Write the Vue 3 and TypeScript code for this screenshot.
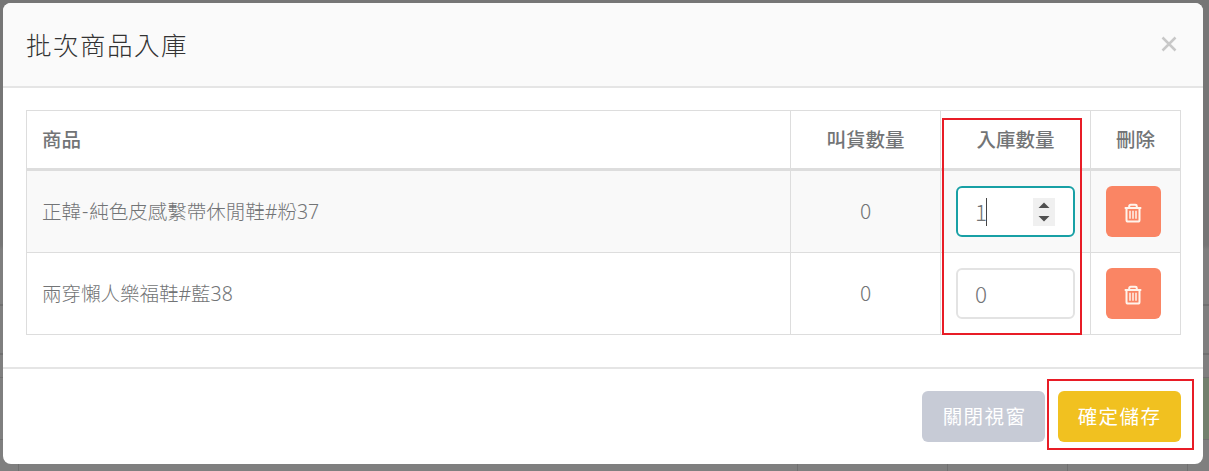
<script setup lang="ts">
interface StockRow {
  name: string[]
  ordered: number
  incoming: number
  active: boolean
}

const headings: string[] = ['商品', '叫貨數量', '入庫數量', '刪除']
const rows: StockRow[] = [
  { name: ['正韓', '-', '純色皮感繫帶休閒鞋#粉37'], ordered: 0, incoming: 1, active: true },
  { name: ['兩穿懶人樂福鞋#藍38'], ordered: 0, incoming: 0, active: false },
]
</script>

<template>
  <div class="backdrop">
    <i class="line edge e1"></i><i class="line edge e2"></i><i class="line edge e3"></i><i class="line edge e4"></i>
    <i class="green"></i>
    <i class="line col c1"></i><i class="line col c2"></i><i class="line col c3"></i><i class="line col c4"></i><i class="line col c5"></i>
    <section class="modal">
      <header class="head">
        <h1>批次商品入庫</h1>
        <button class="close" aria-label="關閉">
          <svg width="16" height="16" viewBox="0 0 16 16"><path d="M1.5 1.5 14.5 14.5M14.5 1.5 1.5 14.5" /></svg>
        </button>
      </header>
      <div class="body">
        <div class="table">
          <div class="row header">
            <div v-for="(h, i) in headings" :key="h" class="cell" :class="{ first: i === 0 }"><span>{{ h }}</span></div>
          </div>
          <div v-for="row in rows" :key="row.name[0]" class="row item" :class="{ striped: row.active }">
            <div class="cell first name"><span v-for="part in row.name" :key="part">{{ part }}</span></div>
            <div class="cell ordered"><span>{{ row.ordered }}</span></div>
            <div class="cell entry">
              <div class="field" :class="{ active: row.active }">
                <span class="value">{{ row.incoming }}</span>
                <i v-if="row.active" class="caret"></i>
                <svg v-if="row.active" class="spinner" width="22" height="28" viewBox="0 0 22 28">
                  <path d="M5.5 10 11 4.5 16.5 10zM5.5 18 11 23.5 16.5 18z" />
                </svg>
              </div>
            </div>
            <div class="cell action">
              <button class="remove" aria-label="刪除">
                <svg width="18" height="20" viewBox="0 0 18 20">
                  <path class="thick" d="M.7 5h16.6M5.2 4.5V3.2q0-1.4 1.5-1.4h4.6q1.5 0 1.5 1.4v1.3M2.5 5v12q0 1.6 1.6 1.6h9.8q1.6 0 1.6-1.6V5" />
                  <path class="thin" d="M6 7.7v8M9 7.7v8M12 7.7v8" />
                </svg>
              </button>
            </div>
          </div>
        </div>
      </div>
      <footer class="foot">
        <button class="btn cancel">關閉視窗</button>
        <button class="btn save">確定儲存</button>
      </footer>
    </section>
    <div class="mark mark-column"></div>
    <div class="mark mark-save"></div>
  </div>
</template>

<style>
body { margin: 0; overflow: hidden; }
</style>

<style scoped>
* { box-sizing: border-box; }
.backdrop {
  position: relative;
  width: 1209px;
  height: 471px;
  padding: 3px 6px 7px 3px;
  overflow: hidden;
  background: linear-gradient(#767676 0, #767676 245px, #7f7f7f 250px, #7f7f7f 100%);
  font-family: "Noto Sans", "Noto Sans CJK TC", sans-serif;
  font-weight: 300;
  font-size: 19.5px;
  color: #727476;
}
.line { position: absolute; background: #707070; }
.edge { left: 0; width: 1209px; height: 2px; }
.e1 { top: 304px; }
.e2 { top: 353px; }
.e3 { top: 377px; height: 1px; }
.e4 { top: 439px; height: 1px; }
.green { position: absolute; left: 1203px; top: 378px; width: 6px; height: 61px; background: #73806e; }
.col { top: 464px; width: 1px; height: 7px; }
.c1 { left: 18px; }
.c2 { left: 797px; }
.c3 { left: 947px; }
.c4 { left: 1067px; }
.c5 { left: 1187px; }
.modal {
  position: relative;
  display: flex;
  flex-direction: column;
  height: 461px;
  background: #fff;
  border-radius: 8px;
  overflow: hidden;
}
.head {
  display: flex;
  align-items: center;
  justify-content: space-between;
  height: 85px;
  padding: 0 26px 0 23px;
  background: #fafafa;
  border-bottom: 2px solid #e5e5e5;
}
h1 {
  margin: 0;
  font-size: 25.5px;
  font-weight: 300;
  line-height: 40px;
  letter-spacing: 1.5px;
  color: #333;
}
button { border: 0; padding: 0; font: inherit; }
.close { display: flex; padding-bottom: 1px; background: none; }
.close path { fill: none; stroke: #c8c8c8; stroke-width: 2.5; }
.body { flex: 1; padding: 22px 22px 0 23px; }
.table { border: 1px solid #ddd; border-width: 1px 0 0 1px; }
.row { display: grid; grid-template-columns: 764px 150px 150px 90px; }
.header { height: 60px; font-weight: 500; }
.item { height: 82px; }
.striped { background: #f9f9f9; }
.cell {
  display: flex;
  align-items: center;
  justify-content: center;
  border-right: 1px solid #ddd;
  border-bottom: 1px solid #ddd;
}
.header .cell { border-bottom-width: 3px; padding-bottom: 2px; }
.header .first, .first { justify-content: flex-start; padding-left: 15px; }
.name { gap: 1px; padding-bottom: 2px; }
.ordered, .value { font-family: "Noto Sans CJK TC", sans-serif; }
.ordered { padding-bottom: 4px; font-size: 21px; }
.entry, .action { justify-content: flex-start; padding-left: 15px; }
.field {
  display: flex;
  align-items: center;
  width: 119px;
  height: 51px;
  padding: 0 18px 0 17px;
  background: #fff;
  border: 2px solid #e3e3e3;
  border-radius: 6px;
  font-size: 22.5px;
}
.field.active { border-color: #18a0a5; }
.value { position: relative; top: -1px; }
.caret { width: 1px; height: 28px; margin-left: -1px; background: #444; }
.spinner { margin-left: auto; background: #f0f0f0; }
.spinner path { fill: #505050; }
.remove {
  display: flex;
  align-items: center;
  justify-content: center;
  width: 55px;
  height: 51px;
  padding: 3px 1px 0 0;
  background: #fa8564;
  border-radius: 6px;
}
.remove path { fill: none; stroke: #fff4ec; }
.remove .thick { stroke-width: 2; }
.remove .thin { stroke-width: 1.5; }
.foot {
  display: flex;
  justify-content: flex-end;
  gap: 13px;
  height: 97px;
  padding: 22px 22px 0 0;
  border-top: 2px solid #e5e5e5;
}
.btn {
  width: 123px;
  height: 51px;
  border-radius: 6px;
  letter-spacing: 1.4px;
  padding: 0 0 2px 2px;
  color: #fff;
  font-weight: 400;
}
.cancel { background: #c7cbd6; }
.save { padding-left: 0; background: #f1c120; }
.mark { position: absolute; border: 2px solid #e81c26; }
.mark-column { left: 942px; top: 118px; width: 140px; height: 217px; }
.mark-save { left: 1047px; top: 379px; width: 147px; height: 71px; }
</style>
